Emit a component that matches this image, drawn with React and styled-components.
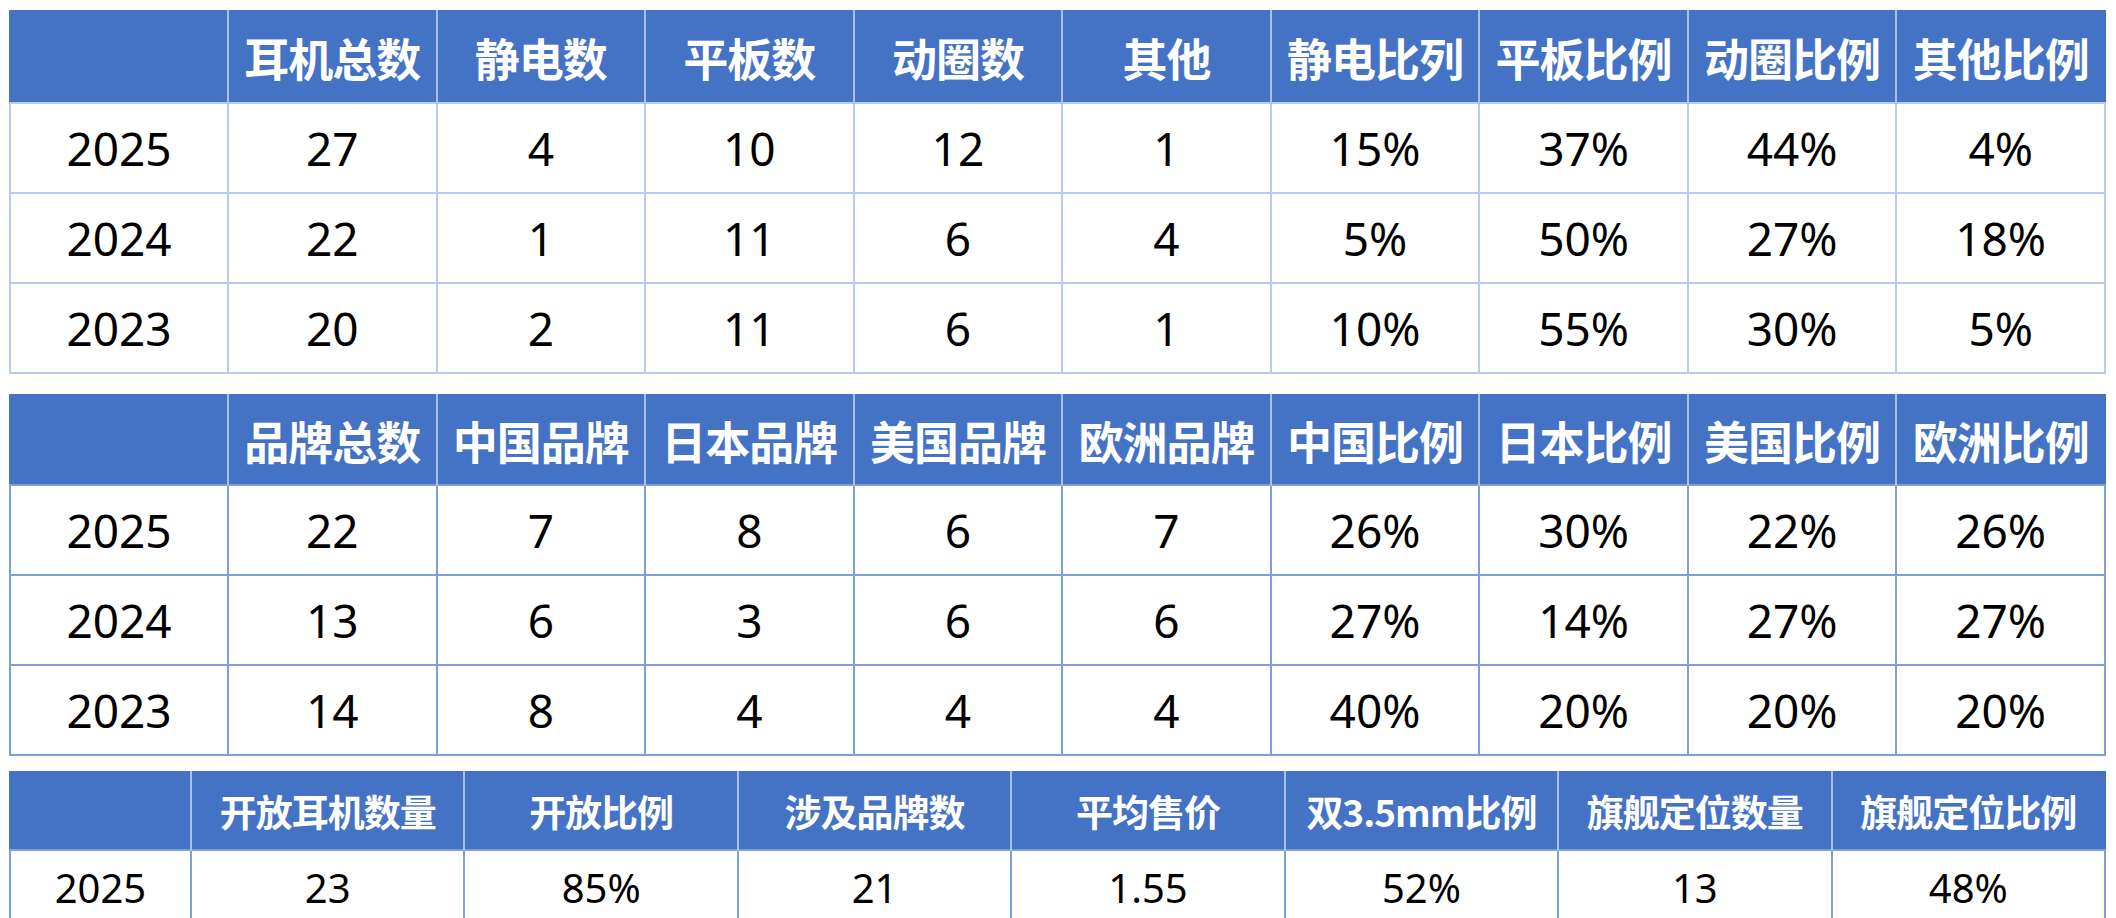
import React from 'react';
import styled, { createGlobalStyle } from 'styled-components';

const GlobalStyle = createGlobalStyle`
  html, body {
    margin: 0;
    padding: 0;
    background: #ffffff;
  }
  body {
    font-family: 'Noto Sans', 'Noto Sans CJK SC', sans-serif;
  }
`;

const Page = styled.div`
  display: flex;
  flex-direction: column;
  padding: 10px 10px 0 9px;
  width: 2097px;
`;

const Table = styled.table`
  width: 100%;
  table-layout: fixed;
  border-collapse: collapse;
  border: 2px solid #4472c4;
  margin-top: ${(p) => p.$top || 0}px;
`;

const HeadCell = styled.th`
  background: #4472c4;
  color: #ffffff;
  font-family: 'Noto Sans CJK SC', sans-serif;
  font-weight: 700;
  font-size: ${(p) => (p.$small ? '37px' : '45px')};
  letter-spacing: -1px;
  white-space: nowrap;
  text-align: center;
  padding: 0;
  border-left: 2px solid #a9c1e8;
  &:first-child {
    border-left: none;
  }
`;

const Cell = styled.td`
  color: #000000;
  font-family: 'Noto Sans', sans-serif;
  font-size: ${(p) => (p.$small ? '40px' : '46px')};
  text-align: center;
  padding: 0;
  border: 2px solid ${(p) => (p.$strong ? '#7f9fd8' : '#b9cbea')};
`;

const HeadRow = styled.tr`
  height: ${(p) => p.$h}px;
`;

const Row = styled.tr`
  height: ${(p) => p.$h}px;
`;

const DataTable = ({ heads, rows, firstWidth, headH, rowH, small, strong, top }) => (
  <Table $top={top}>
    <colgroup>
      <col style={{ width: firstWidth }} />
      {heads.map((h) => (
        <col key={h} />
      ))}
    </colgroup>
    <thead>
      <HeadRow $h={headH}>
        <HeadCell $small={small} />
        {heads.map((h) => (
          <HeadCell key={h} $small={small}>
            {h}
          </HeadCell>
        ))}
      </HeadRow>
    </thead>
    <tbody>
      {rows.map((r) => (
        <Row key={r[0]} $h={rowH}>
          {r.map((v, i) => (
            <Cell key={i} $small={small} $strong={strong}>
              {v}
            </Cell>
          ))}
        </Row>
      ))}
    </tbody>
  </Table>
);

const typeHeads = ['耳机总数', '静电数', '平板数', '动圈数', '其他', '静电比列', '平板比例', '动圈比例', '其他比例'];
const typeRows = [
  ['2025', '27', '4', '10', '12', '1', '15%', '37%', '44%', '4%'],
  ['2024', '22', '1', '11', '6', '4', '5%', '50%', '27%', '18%'],
  ['2023', '20', '2', '11', '6', '1', '10%', '55%', '30%', '5%'],
];

const brandHeads = ['品牌总数', '中国品牌', '日本品牌', '美国品牌', '欧洲品牌', '中国比例', '日本比例', '美国比例', '欧洲比例'];
const brandRows = [
  ['2025', '22', '7', '8', '6', '7', '26%', '30%', '22%', '26%'],
  ['2024', '13', '6', '3', '6', '6', '27%', '14%', '27%', '27%'],
  ['2023', '14', '8', '4', '4', '4', '40%', '20%', '20%', '20%'],
];

const openHeads = ['开放耳机数量', '开放比例', '涉及品牌数', '平均售价', '双3.5mm比例', '旗舰定位数量', '旗舰定位比例'];
const openRows = [['2025', '23', '85%', '21', '1.55', '52%', '13', '48%']];

export default function App() {
  return (
    <>
      <GlobalStyle />
      <Page>
        <DataTable heads={typeHeads} rows={typeRows} firstWidth={218} headH={92} rowH={90} />
        <DataTable heads={brandHeads} rows={brandRows} firstWidth={218} headH={90} rowH={90} strong top={20} />
        <DataTable heads={openHeads} rows={openRows} firstWidth={181} headH={78} rowH={74} small strong top={15} />
      </Page>
    </>
  );
}
